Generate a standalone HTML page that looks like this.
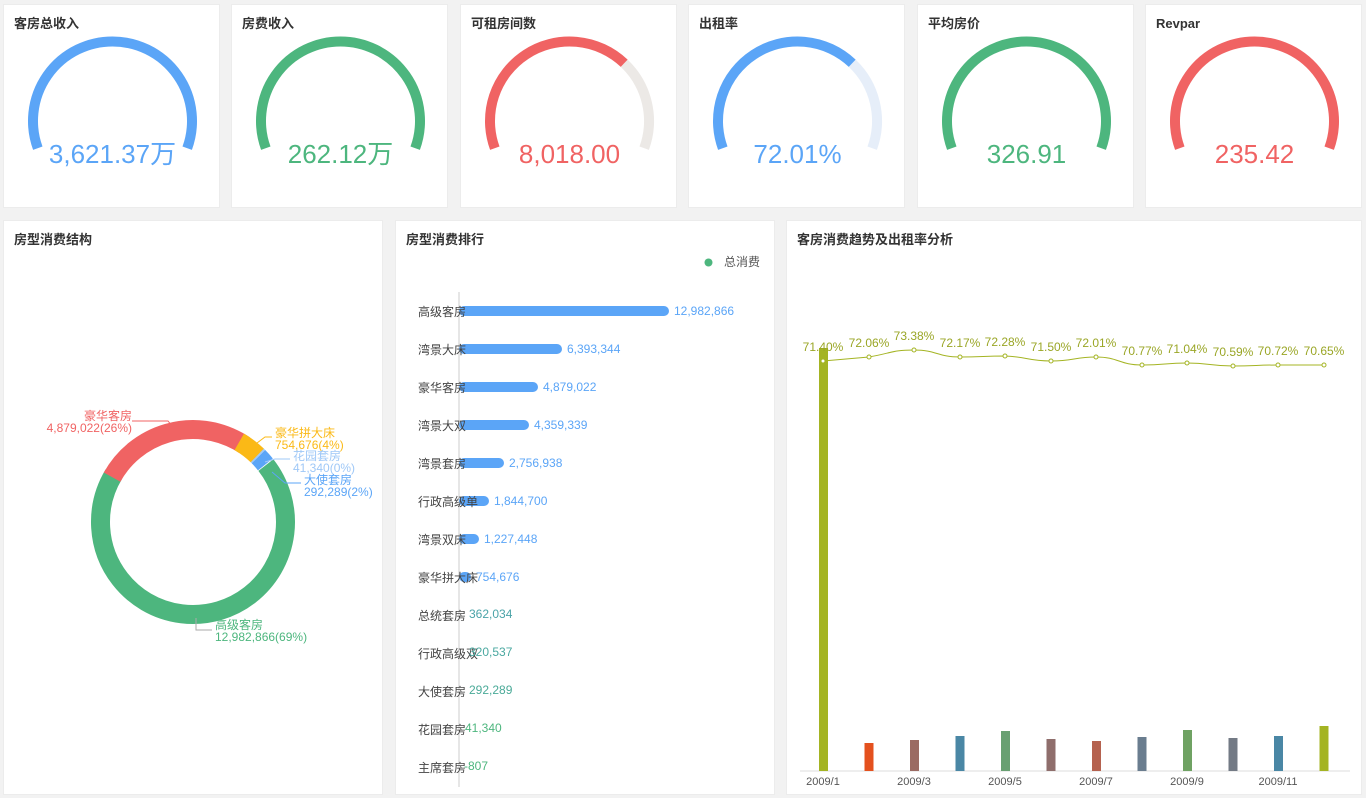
<!DOCTYPE html>
<html><head><meta charset="utf-8"><style>
*{margin:0;padding:0;box-sizing:border-box}
body{width:1366px;height:798px;background:#f2f2f2;font-family:"Liberation Sans","Noto Sans CJK SC",sans-serif;position:relative;overflow:hidden}
.card{position:absolute;top:4px;width:217px;height:204px;background:#fff;border:1px solid #ececec}
.t{position:absolute;left:10px;top:11px;font-size:13px;font-weight:bold;color:#333;line-height:15px}
.card svg{position:absolute;left:0;top:0}
.panel{position:absolute;top:220px;height:575px;background:#fff;border:1px solid #ececec}
.panel .t{top:11px}
svg text{font-family:"Liberation Sans","Noto Sans CJK SC",sans-serif}
</style></head><body>

<div class="card" style="left:3px"><div class="t">客房总收入</div>
<svg width="217" height="204"><path d="M33.8 143.2 A79.5 79.5 0 1 1 183.2 143.2" fill="none" stroke="#5ba5f7" stroke-width="10"/><text x="108.5" y="158" text-anchor="middle" font-size="26" fill="#5ba5f7">3,621.37万</text></svg></div>

<div class="card" style="left:231px"><div class="t">房费收入</div>
<svg width="217" height="204"><path d="M33.8 143.2 A79.5 79.5 0 1 1 183.2 143.2" fill="none" stroke="#4db67e" stroke-width="10"/><text x="108.5" y="158" text-anchor="middle" font-size="26" fill="#4db67e">262.12万</text></svg></div>

<div class="card" style="left:460px"><div class="t">可租房间数</div>
<svg width="217" height="204"><path d="M163.2 58.3 A79.5 79.5 0 0 1 183.2 143.2" fill="none" stroke="#ece9e6" stroke-width="10"/><path d="M33.8 143.2 A79.5 79.5 0 0 1 163.2 58.3" fill="none" stroke="#f06363" stroke-width="10"/><text x="108.5" y="158" text-anchor="middle" font-size="26" fill="#f06363">8,018.00</text></svg></div>

<div class="card" style="left:688px"><div class="t">出租率</div>
<svg width="217" height="204"><path d="M163.2 58.3 A79.5 79.5 0 0 1 183.2 143.2" fill="none" stroke="#e6eef9" stroke-width="10"/><path d="M33.8 143.2 A79.5 79.5 0 0 1 163.2 58.3" fill="none" stroke="#5ba5f7" stroke-width="10"/><text x="108.5" y="158" text-anchor="middle" font-size="26" fill="#5ba5f7">72.01%</text></svg></div>

<div class="card" style="left:917px"><div class="t">平均房价</div>
<svg width="217" height="204"><path d="M33.8 143.2 A79.5 79.5 0 1 1 183.2 143.2" fill="none" stroke="#4db67e" stroke-width="10"/><text x="108.5" y="158" text-anchor="middle" font-size="26" fill="#4db67e">326.91</text></svg></div>

<div class="card" style="left:1145px"><div class="t">Revpar</div>
<svg width="217" height="204"><path d="M33.8 143.2 A79.5 79.5 0 1 1 183.2 143.2" fill="none" stroke="#f06363" stroke-width="10"/><text x="108.5" y="158" text-anchor="middle" font-size="26" fill="#f06363">235.42</text></svg></div>

<div class="panel" style="left:3px;width:380px"><div class="t">房型消费结构</div></div>
<div class="panel" style="left:395px;width:380px"><div class="t">房型消费排行</div></div>
<div class="panel" style="left:786px;width:576px"><div class="t">客房消费趋势及出租率分析</div></div>

<svg width="1366" height="798" style="position:absolute;left:0;top:0">
<g fill="none" stroke-width="19">
<circle cx="193" cy="522" r="92.5" stroke="#4db67e" stroke-dasharray="402 600" transform="rotate(-38 193 522)"/>
<circle cx="193" cy="522" r="92.5" stroke="#f06363" stroke-dasharray="153 600" transform="rotate(209 193 522)"/>
<circle cx="193" cy="522" r="92.5" stroke="#fbb916" stroke-dasharray="23 600" transform="rotate(-60 193 522)"/>
<circle cx="193" cy="522" r="92.5" stroke="#9fc8f7" stroke-dasharray="1.5 600" transform="rotate(-46 193 522)"/>
<circle cx="193" cy="522" r="92.5" stroke="#5ba5f7" stroke-dasharray="10.5 600" transform="rotate(-45 193 522)"/>
</g>
<g fill="none" stroke-width="1">
<polyline points="132,421 168,421 172,426" stroke="#f06363"/>
<polyline points="257,443 265,437 272,437" stroke="#fbb916"/>
<polyline points="265,462 275,459 290,459" stroke="#9fc8f7"/>
<polyline points="272,472 285,483 301,483" stroke="#5ba5f7"/>
<polyline points="196,618 196,630 212,630" stroke="#aaa"/>
</g>
<g font-size="12">
<text x="132" y="420" text-anchor="end" fill="#f06363">豪华客房</text>
<text x="132" y="432" text-anchor="end" fill="#f06363">4,879,022(26%)</text>
<text x="275" y="437" fill="#fbb916">豪华拼大床</text>
<text x="275" y="449" fill="#fbb916">754,676(4%)</text>
<text x="293" y="460" fill="#9fc8f7">花园套房</text>
<text x="293" y="472" fill="#9fc8f7">41,340(0%)</text>
<text x="304" y="484" fill="#5ba5f7">大使套房</text>
<text x="304" y="496" fill="#5ba5f7">292,289(2%)</text>
<text x="215" y="629" fill="#4db67e">高级客房</text>
<text x="215" y="641" fill="#4db67e">12,982,866(69%)</text>
</g>

<circle cx="708.5" cy="262.5" r="4" fill="#4db67e"/>
<text x="724" y="266" font-size="12" fill="#555">总消费</text>
<line x1="459" y1="292" x2="459" y2="787" stroke="#ccc"/>
<g fill="#5ba5f7">
<rect x="459" y="306" width="210" height="10" rx="5"/>
<rect x="459" y="344" width="103" height="10" rx="5"/>
<rect x="459" y="382" width="79" height="10" rx="5"/>
<rect x="459" y="420" width="70" height="10" rx="5"/>
<rect x="459" y="458" width="45" height="10" rx="5"/>
<rect x="459" y="496" width="30" height="10" rx="5"/>
<rect x="459" y="534" width="20" height="10" rx="5"/>
<rect x="459" y="572" width="12" height="10" rx="5"/>
</g>
<g font-size="12" fill="#444">
<text x="418" y="316">高级客房</text><text x="418" y="354">湾景大床</text><text x="418" y="392">豪华客房</text>
<text x="418" y="430">湾景大双</text><text x="418" y="468">湾景套房</text><text x="418" y="506">行政高级单</text>
<text x="418" y="544">湾景双床</text><text x="418" y="582">豪华拼大床</text><text x="418" y="620">总统套房</text>
<text x="418" y="658">行政高级双</text><text x="418" y="696">大使套房</text><text x="418" y="734">花园套房</text>
<text x="418" y="772">主席套房</text>
</g>
<g font-size="12">
<text x="674" y="315" fill="#5ba5f7">12,982,866</text>
<text x="567" y="353" fill="#5ba5f7">6,393,344</text>
<text x="543" y="391" fill="#5ba5f7">4,879,022</text>
<text x="534" y="429" fill="#5ba5f7">4,359,339</text>
<text x="509" y="467" fill="#5ba5f7">2,756,938</text>
<text x="494" y="505" fill="#5ba5f7">1,844,700</text>
<text x="484" y="543" fill="#5ba5f7">1,227,448</text>
<text x="476" y="581" fill="#5ba5f7">754,676</text>
<text x="469" y="618" fill="#4aa3a8">362,034</text>
<text x="469" y="656" fill="#4aa8a0">320,537</text>
<text x="469" y="694" fill="#4aaa98">292,289</text>
<text x="465" y="732" fill="#4db67e">41,340</text>
<text x="464" y="770" fill="#4db67e">-807</text>
</g>

<line x1="800" y1="771" x2="1350" y2="771" stroke="#ddd"/>
<rect x="819" y="348" width="9" height="423" fill="#a4b423"/>
<rect x="864.5" y="743" width="9" height="28" fill="#e4511e"/>
<rect x="910" y="740" width="9" height="31" fill="#9b6b63"/>
<rect x="955.5" y="736" width="9" height="35" fill="#4a87a5"/>
<rect x="1001" y="731" width="9" height="40" fill="#69a072"/>
<rect x="1046.5" y="739" width="9" height="32" fill="#8f6e6c"/>
<rect x="1092" y="741" width="9" height="30" fill="#b5624f"/>
<rect x="1137.5" y="737" width="9" height="34" fill="#6a7d8f"/>
<rect x="1183" y="730" width="9" height="41" fill="#6fa263"/>
<rect x="1228.5" y="738" width="9" height="33" fill="#737a85"/>
<rect x="1274" y="736" width="9" height="35" fill="#4a87a5"/>
<rect x="1319.5" y="726" width="9" height="45" fill="#a4b423"/>
<g font-size="11" fill="#555" text-anchor="middle">
<text x="823" y="785">2009/1</text><text x="914" y="785">2009/3</text><text x="1005" y="785">2009/5</text>
<text x="1096" y="785">2009/7</text><text x="1187" y="785">2009/9</text><text x="1278" y="785">2009/11</text>
</g>
<path d="M823 361 C846 359 846 359 869 357 C892 353 892 350 914 350 C937 350 937 357 960 357 C983 357 983 356 1005 356 C1028 357 1028 361 1051 361 C1074 361 1074 357 1096 357 C1119 357 1119 365 1142 365 C1165 365 1165 363 1187 363 C1210 363 1210 366 1233 366 C1256 366 1256 365 1278 365 L1324 365" fill="none" stroke="#a4b423" stroke-width="1"/>
<g fill="#fff" stroke="#a4b423" stroke-width="1">
<circle cx="869" cy="357" r="2"/><circle cx="914" cy="350" r="2"/><circle cx="960" cy="357" r="2"/>
<circle cx="1005" cy="356" r="2"/><circle cx="1051" cy="361" r="2"/><circle cx="1096" cy="357" r="2"/><circle cx="1142" cy="365" r="2"/>
<circle cx="1187" cy="363" r="2"/><circle cx="1233" cy="366" r="2"/><circle cx="1278" cy="365" r="2"/><circle cx="1324" cy="365" r="2"/>
</g>
<circle cx="823" cy="361" r="1.5" fill="#fff"/>
<g font-size="12" fill="#9aa626" text-anchor="middle">
<text x="823" y="351">71.40%</text><text x="869" y="347">72.06%</text><text x="914" y="340">73.38%</text>
<text x="960" y="347">72.17%</text><text x="1005" y="346">72.28%</text><text x="1051" y="351">71.50%</text>
<text x="1096" y="347">72.01%</text><text x="1142" y="355">70.77%</text><text x="1187" y="353">71.04%</text>
<text x="1233" y="356">70.59%</text><text x="1278" y="355">70.72%</text><text x="1324" y="355">70.65%</text>
</g>
</svg>
</body></html>
